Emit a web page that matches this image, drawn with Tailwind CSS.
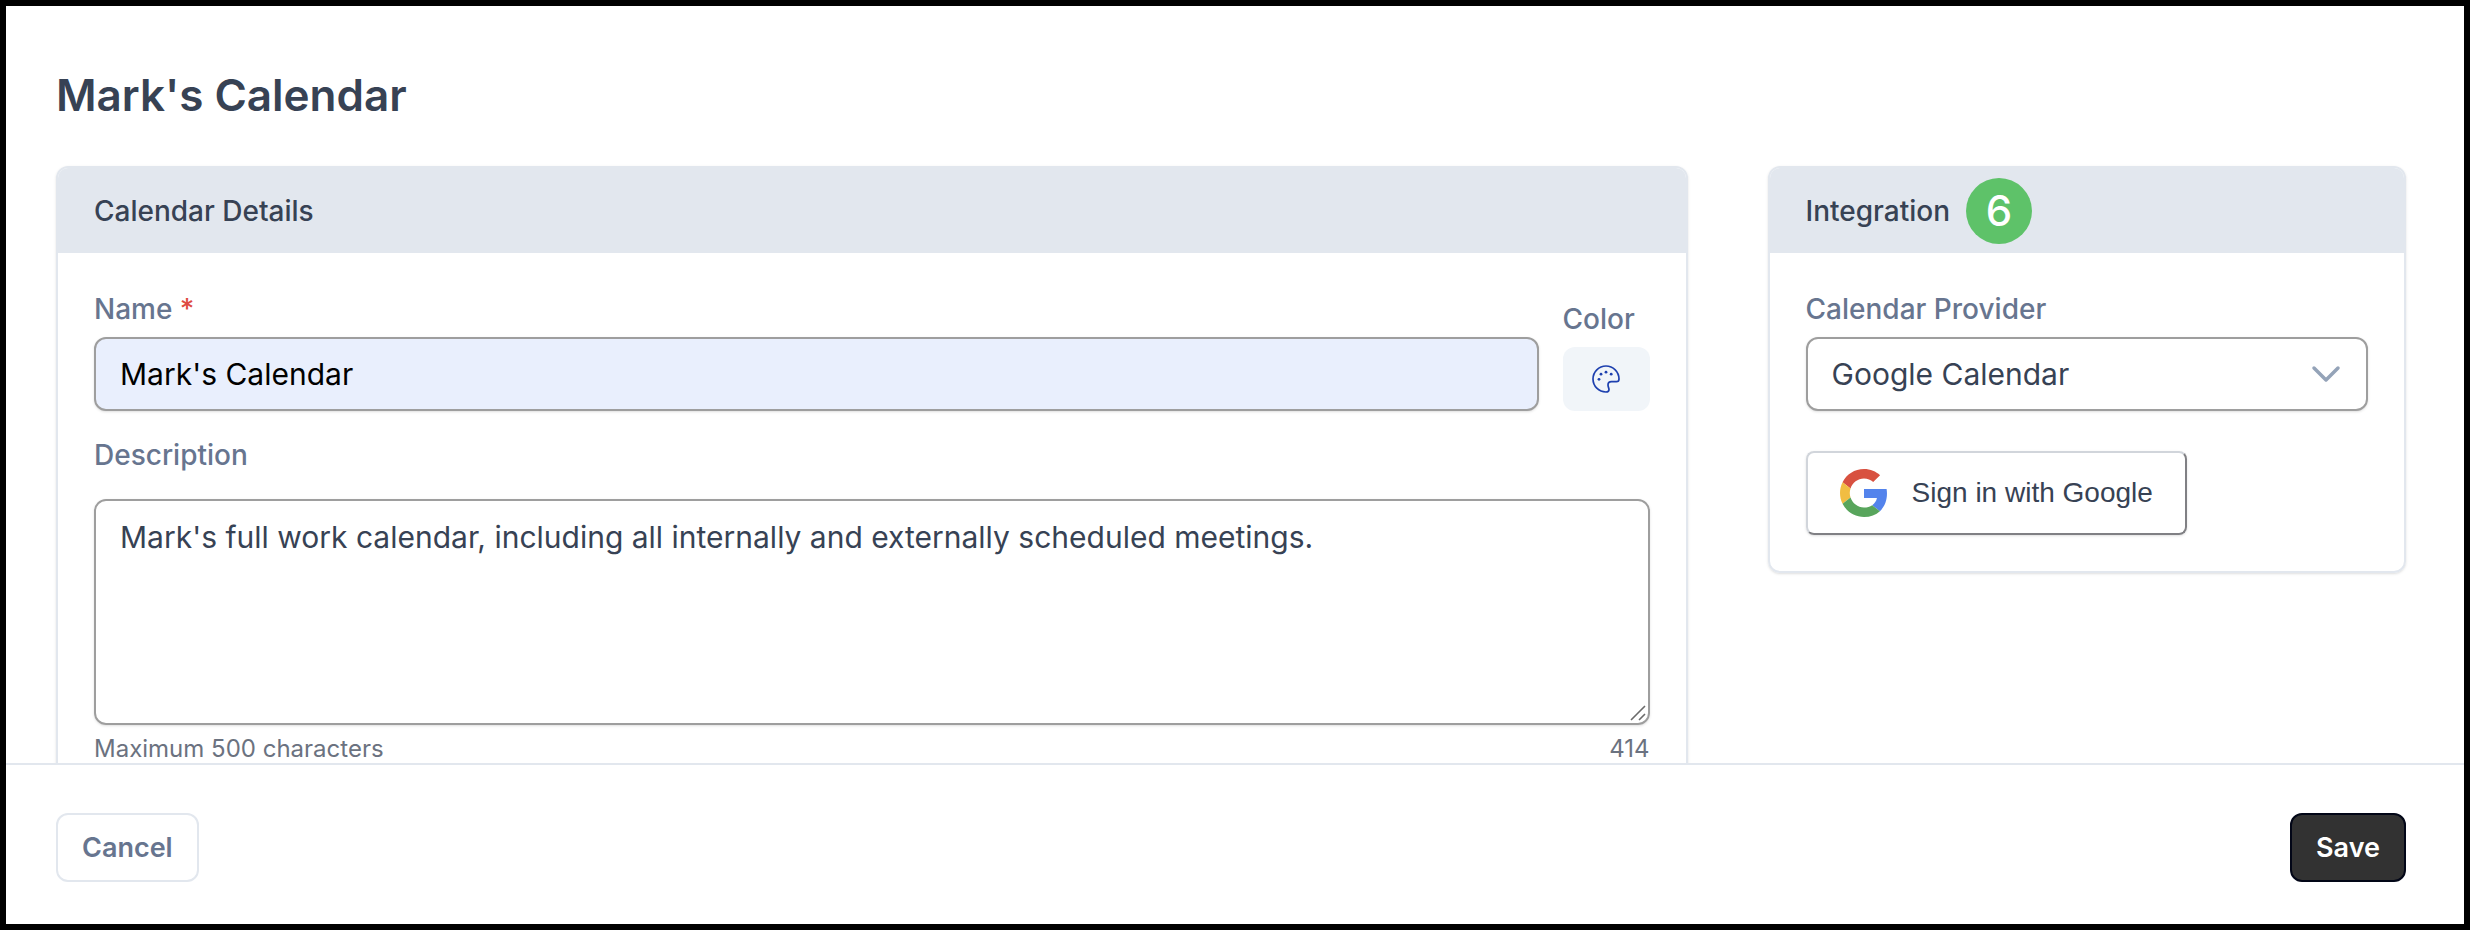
<!DOCTYPE html>
<html lang="en">
<head>
    <meta charset="UTF-8">
    <meta name="viewport" content="width=device-width, initial-scale=1.0">
    <title>Mark's Calendar</title>
    <script src="https://cdn.jsdelivr.net/npm/@tailwindcss/browser@4"></script>
</head>
<body class="font-['Inter','Liberation_Sans',sans-serif] text-[28px] leading-10 text-[#374254]">
    <form class="flex flex-col h-screen bg-white border-6 border-black">
        <!-- Scrollable content -->
        <main class="flex-1 min-h-0 overflow-hidden pl-[50px] pr-[58px] pt-[65px]">
            <h1 class="mb-[47px] text-[44px] leading-12 font-semibold">Mark's Calendar</h1>

            <div class="grid grid-cols-[23fr_9fr] items-start gap-20">
                <!-- Calendar details -->
                <section class="border-2 border-[#e2e7ee] rounded-xl shadow-sm overflow-hidden">
                    <h2 class="flex items-center h-[85px] px-9 bg-[#e2e7ee] font-medium">Calendar Details</h2>
                    <div class="p-9">
                        <div class="flex items-end gap-6 mb-6">
                            <div class="flex-1">
                                <label for="name" class="block mb-2 font-medium text-[#67758f]">Name <span class="text-[#de4b41]">*</span></label>
                                <input type="text" id="name" name="name" value="Mark's Calendar" required
                                       class="block w-full h-[74px] px-6 text-[30px] text-black bg-[#e9effd] border-2 border-[#9e9e9e] rounded-xl shadow-sm">
                            </div>
                            <div class="w-[87px]">
                                <label for="color" class="block mb-2 font-medium text-[#67758f]">Color</label>
                                <button type="button" id="color" class="flex items-center justify-center w-full h-16 bg-[#f1f5f9] rounded-xl">
                                    <svg class="w-7 h-7" viewBox="0 0 28 28" fill="none" stroke="#1e40af" stroke-width="1.7">
                                        <path d="M14 1C6.8 1 1 6.8 1 14C1 21.2 6.8 27 14 27C16.2 27 17 26 17 24.5C17 23 16 22 16 20C16 18 17.3 16.7 19.5 16.7L24.5 16.7C26.3 16.7 27 15.8 27 14C27 6.8 21.2 1 14 1Z"/>
                                        <g fill="#1e40af" stroke="none">
                                            <circle cx="7" cy="14.3" r="1.4"/>
                                            <circle cx="9" cy="9.2" r="1.4"/>
                                            <circle cx="14" cy="7.2" r="1.4"/>
                                            <circle cx="19.2" cy="9.2" r="1.4"/>
                                        </g>
                                    </svg>
                                </button>
                            </div>
                        </div>

                        <label for="description" class="block mb-6 font-medium text-[#67758f]">Description</label>
                        <div class="relative">
                            <textarea id="description" name="description" maxlength="500"
                                      class="block w-full h-[226px] px-6 py-3 text-[30px] leading-12 border-2 border-[#9e9e9e] rounded-xl shadow-sm resize-none">Mark's full work calendar, including all internally and externally scheduled meetings.</textarea>
                            <!-- Resize grip -->
                            <svg class="absolute right-1 bottom-1 w-4 h-4 pointer-events-none" viewBox="0 0 16 16" fill="none" stroke="#6b6b6b" stroke-width="1.6">
                                <path d="M1 15L15 1M9 15L15 9"/>
                            </svg>
                        </div>
                        <div class="flex justify-between mt-2 text-2xl leading-8 text-[#6b7280]">
                            <span>Maximum 500 characters</span>
                            <span>414</span>
                        </div>
                    </div>
                </section>

                <!-- Integration -->
                <section class="border-2 border-[#e2e7ee] rounded-xl shadow-sm overflow-hidden">
                    <div class="flex items-center gap-4 h-[85px] px-9 bg-[#e2e7ee]">
                        <h2 class="font-medium">Integration</h2>
                        <span class="flex items-center justify-center w-[66px] h-[66px] rounded-full bg-[#5ec269] text-[42px] font-medium text-white">6</span>
                    </div>
                    <div class="p-9">
                        <label for="provider" class="block mb-2 font-medium text-[#67758f]">Calendar Provider</label>
                        <div class="relative mb-10">
                            <select id="provider" name="provider"
                                    class="block w-full h-[74px] px-6 text-[30px] appearance-none bg-white border-2 border-[#9e9e9e] rounded-xl shadow-sm">
                                <option>Google Calendar</option>
                            </select>
                            <svg class="absolute right-[26px] top-7 w-8 h-5 pointer-events-none" viewBox="0 0 32 20" fill="none" stroke="#94a3b8" stroke-width="3.5" stroke-linecap="round" stroke-linejoin="round">
                                <path d="M4 3L16 15L28 3"/>
                            </svg>
                        </div>
                        <button type="button" class="flex items-center h-21 px-8 gap-6 font-['Liberation_Sans',Arial,sans-serif] text-[28px] border-2 border-t-[#d1d5db] border-l-[#d1d5db] border-r-[#808084] border-b-[#808084] rounded-lg shadow-sm">
                            <svg class="w-12 h-12" viewBox="0 0 48 48">
                                <path fill="#d85140" d="M24 9.5c3.54 0 6.71 1.22 9.21 3.6l6.85-6.85C35.9 2.38 30.47 0 24 0 14.62 0 6.51 5.38 2.56 13.22l7.98 6.19C12.43 13.72 17.74 9.5 24 9.5z"/>
                                <path fill="#5383ec" d="M46.98 24.55c0-1.57-.15-3.09-.38-4.55H24v9.02h12.94c-.58 2.96-2.26 5.48-4.78 7.18l7.73 6c4.51-4.18 7.09-10.36 7.09-17.65z"/>
                                <path fill="#f1bd42" d="M10.53 28.59c-.48-1.45-.76-2.99-.76-4.59s.27-3.14.76-4.59l-7.98-6.19C.92 16.46 0 20.12 0 24c0 3.88.92 7.54 2.56 10.78l7.97-6.19z"/>
                                <path fill="#58a55c" d="M24 48c6.48 0 11.93-2.13 15.89-5.81l-7.73-6c-2.15 1.45-4.92 2.3-8.16 2.3-6.26 0-11.57-4.22-13.47-9.91l-7.98 6.19C6.51 42.62 14.62 48 24 48z"/>
                            </svg>
                            Sign in with Google
                        </button>
                    </div>
                </section>
            </div>
        </main>

        <!-- Actions -->
        <footer class="flex justify-between pl-[50px] pr-[58px] pt-12 pb-[42px] text-[27px] font-semibold bg-white border-t-2 border-[#e2e7ee]">
            <button type="button" class="h-[69px] px-6 text-[#67758f] border-2 border-[#e2e7ee] rounded-xl">Cancel</button>
            <button type="submit" class="h-[69px] px-6 text-white bg-[#323232] border-2 border-[#020617] rounded-xl">Save</button>
        </footer>
    </form>
</body>
</html>
